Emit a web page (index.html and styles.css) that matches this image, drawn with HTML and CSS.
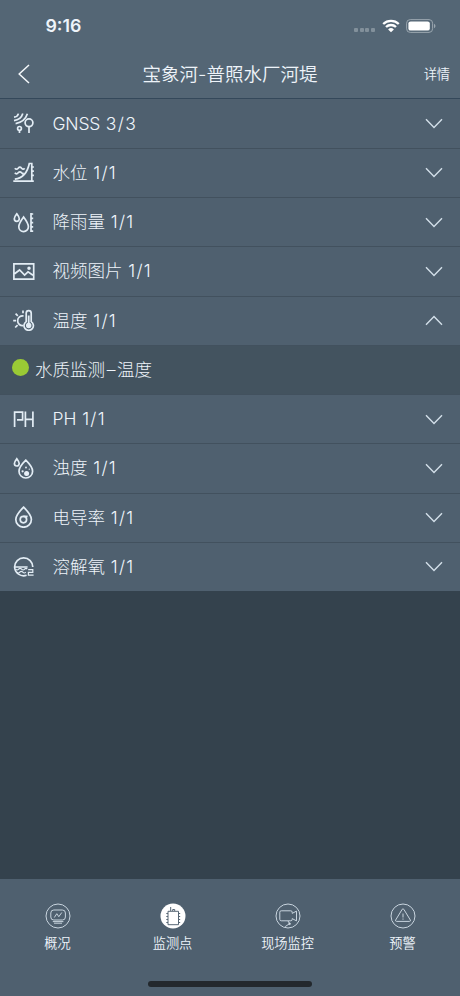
FILE: index.html
```
<!DOCTYPE html>
<html lang="zh-CN">
<head>
<meta charset="utf-8">
<title>宝象河-普照水厂河堤</title>
<link rel="stylesheet" href="styles.css">
</head>
<body>
<div class="app">
  <header class="header">
    <div class="status">
      <span class="time">9:16</span>
      <span class="signal"><i></i><i></i><i></i><i></i></span>
      <svg class="wifi" viewBox="0 0 18 14"><path d="M1.2 5a11.2 11.2 0 0 1 15.6 0M4 8a7.2 7.2 0 0 1 10 0" fill="none" stroke="#fff" stroke-width="2.3"/><path d="M9 13.3 6.1 10.5a4.1 4.1 0 0 1 5.8 0z" fill="#fff"/></svg>
      <svg class="battery" viewBox="0 0 30 14"><rect x=".6" y=".6" width="26" height="12.8" rx="3.6" fill="none" stroke="#9aa6af"/><rect x="2.4" y="2.4" width="21.4" height="9.2" rx="2.2" fill="#fff"/><path d="M28 4.8q1.5.7 1.5 2.2T28 9.2z" fill="#9aa6af"/></svg>
    </div>
    <div class="nav">
      <svg class="back" viewBox="0 0 12 20"><path d="M11 1 1.2 10 11 19"/></svg>
      <h1 class="title">宝象河-普照水厂河堤</h1>
      <a class="detail">详情</a>
    </div>
  </header>

  <main class="list">
    <div class="row">
      <svg class="icon" viewBox="0 0 22 22"><path d="M1 5.2Q4.6 4.8 5.4 1.6M1 8.7Q8 7.8 9.8 1.6M2.6 11.6Q11.8 10 14.4 1.8"/><circle cx="16" cy="10.8" r="3.9"/><path d="M16 14.7V21M6.5 18.4v2.6"/><circle cx="6.5" cy="16.4" r="1.9"/></svg>
      <span class="label"><span class="latin">GNSS</span> <span class="count">3/3</span></span><svg class="arrow" viewBox="0 0 18 11"><path d="m1 1.2 8 8.2 8-8.2"/></svg>
    </div>
    <div class="row">
      <svg class="icon" viewBox="0 0 22 22"><path d="M1.8 7.2q1.7 2 3.4 0t3.4 0 3 0M1.8 11.8q1.7 2 3.4 0t3.4 0 1.2 0M.3 20.2H20.8M1.8 18.2Q13.5 16.5 16.3 2.5H18.8V20M19 6h1.9M19 10.2h1.9M19 14.4h1.9"/></svg>
      <span class="label">水位 <span class="count">1/1</span></span><svg class="arrow" viewBox="0 0 18 11"><path d="m1 1.2 8 8.2 8-8.2"/></svg>
    </div>
    <div class="row">
      <svg class="icon" viewBox="0 0 22 22"><path d="M3.8 2.8Q1.3 6 1.3 7.8a2.5 2.5 0 0 0 5 0Q6.3 6 3.8 2.8zM10.6 6Q5.8 12.4 5.8 15.8a4.8 4.8 0 0 0 9.6 0Q15.4 12.4 10.6 6zM18 2v19M18 3h2.2M18 7.3h2.2M18 11.6h2.2M18 15.9h2.2M18 20.2h2.2"/></svg>
      <span class="label">降雨量 <span class="count">1/1</span></span><svg class="arrow" viewBox="0 0 18 11"><path d="m1 1.2 8 8.2 8-8.2"/></svg>
    </div>
    <div class="row">
      <svg class="icon" viewBox="0 0 22 22"><path d="M.9 3.8h19.8v15.4H.9zM1.6 13.8l5-3.8 5 5 3.4-3.2 5 3.4"/><circle cx="16" cy="8.2" r=".9" fill="#e8f0f8"/></svg>
      <span class="label">视频图片 <span class="count">1/1</span></span><svg class="arrow" viewBox="0 0 18 11"><path d="m1 1.2 8 8.2 8-8.2"/></svg>
    </div>
    <div class="row">
      <svg class="icon" viewBox="0 0 22 22"><path d="M13.2 12.6V4.2a2.5 2.5 0 0 1 5 0v8.4a4.7 4.7 0 1 1-5 0z"/><path d="M15.7 6.5v8" stroke-width="1.8"/><circle cx="15.7" cy="16.6" r="1.9" fill="#e8f0f8"/><path d="M10.6 7a4.9 4.9 0 1 0-.2 9.6M.2 11.6h2.8M2.6 4.6 4.8 6.8M10 1.5v2.8M2.2 18.5 4.6 16.1"/></svg>
      <span class="label">温度 <span class="count">1/1</span></span><svg class="arrow" viewBox="0 0 18 11"><path d="m1 9.8 8-8.2 8 8.2"/></svg>
    </div>
    <div class="row sub"><span class="dot"></span><span class="sublabel">水质监测<span class="dash">–</span>温度</span></div>
    <div class="row">
      <svg class="icon" viewBox="0 0 22 22"><path d="M1.6 19V4.2h8v7.6H4M12.4 3.5v15.4M19.9 3.5v15.4M12.4 11.4h7.5"/></svg>
      <span class="label">PH <span class="count">1/1</span></span><svg class="arrow" viewBox="0 0 18 11"><path d="m1 1.2 8 8.2 8-8.2"/></svg>
    </div>
    <div class="row">
      <svg class="icon" viewBox="0 0 22 22"><path d="M3.8 1.7Q1.4 4.8 1.4 6.6a2.4 2.4 0 0 0 4.8 0Q6.2 4.8 3.8 1.7zM12.8 3.2Q6 10 6 14.2a6.8 6.8 0 0 0 13.6 0Q19.6 10 12.8 3.2z"/><g fill="#e8f0f8" stroke="none"><circle cx="13.6" cy="16.5" r="2.5"/><circle cx="9.6" cy="14.3" r="1.1"/><circle cx="13" cy="10.5" r=".9"/><circle cx="16.3" cy="12.2" r=".6"/></g></svg>
      <span class="label">浊度 <span class="count">1/1</span></span><svg class="arrow" viewBox="0 0 18 11"><path d="m1 1.2 8 8.2 8-8.2"/></svg>
    </div>
    <div class="row">
      <svg class="icon" viewBox="0 0 22 22"><path d="M10.6 1.2Q2.8 8.8 2.8 13.4a7.8 7.8 0 0 0 15.6 0Q18.4 8.8 10.6 1.2z"/><circle cx="10.4" cy="13.6" r="3.2"/><path d="M10.4 10.4h4.2"/></svg>
      <span class="label">电导率 <span class="count">1/1</span></span><svg class="arrow" viewBox="0 0 18 11"><path d="m1 1.2 8 8.2 8-8.2"/></svg>
    </div>
    <div class="row">
      <svg class="icon" viewBox="0 0 22 22"><path d="M1.6 12a9.1 9.1 0 1 1 18.2 0M1.6 12a9.1 9.1 0 0 0 12 8.3M1.6 12h13"/><path stroke-width="1.2" d="M2.6 14.2q1.5 1.6 3 0t3 0 3 0 2.6 0M3.8 17.2q1.5 1.6 3 0t3 0 3 0M15.2 14.6h4.6v2.8h-4.4v2.8h5.2"/></svg>
      <span class="label">溶解氧 <span class="count">1/1</span></span><svg class="arrow" viewBox="0 0 18 11"><path d="m1 1.2 8 8.2 8-8.2"/></svg>
    </div>
  </main>

  <footer class="tabbar">
    <div class="tabs">
      <div class="tab"><svg class="tabicon" viewBox="0 0 26 26"><circle cx="13" cy="13" r="12"/><rect x="5.8" y="7" width="14.6" height="10" rx="3"/><path d="m9.3 14.5 2.5-3.8 2 3 3-4.2M7.8 18.6h10.6M9 20.2h8"/></svg><span>概况</span></div>
      <div class="tab"><svg class="tabicon" viewBox="0 0 26 26"><circle cx="13" cy="13" r="12.5" fill="#fff" stroke="none"/><path class="ink" d="M8 8.3h10.5v13.4H8zM10.7 8V4M12.7 8V6.5h2V8M6.3 10.5H8M6.3 13.5H8M6.3 16.5H8M6.3 19.5H8M18.5 10.5h1.7M18.5 13.5h1.7M18.5 16.5h1.7M18.5 19.5h1.7"/></svg><span>监测点</span></div>
      <div class="tab"><svg class="tabicon" viewBox="0 0 26 26"><circle cx="13" cy="13" r="12"/><path d="M6.2 7.8h9.6q1.4 0 1.4 1.4v1.2l4.3-2.3v9.8l-4.3-2.3v.8q0 1.4-1.4 1.4H6.2q-1.4 0-1.4-1.4V9.2q0-1.4 1.4-1.4zM13 18l1.6 2.6-4.4 3"/><circle cx="14.6" cy="20.8" r=".8" fill="#fff"/></svg><span>现场监控</span></div>
      <div class="tab"><svg class="tabicon" viewBox="0 0 26 26"><circle cx="13" cy="13" r="12"/><path d="M12.2 6.3q.8-1.1 1.6 0l6.6 10.8q.4 1.2-.8 1.3H6.4q-1.2-.1-.8-1.3zM13 10.5v4M13 15.5v1.2"/></svg><span>预警</span></div>
    </div>
    <div class="home"></div>
  </footer>
</div>
</body>
</html>
```
FILE: styles.css
```
* { box-sizing: border-box; }
body { margin: 0; font-family: Inter, "Noto Sans CJK SC", sans-serif; color: #eef4fa; }
.app { width: 460px; height: 996px; display: flex; flex-direction: column; background: #34424d; }
.header { height: 98.5px; background: #546675; border-bottom: 1px solid #34485a; }
.status { height: 50px; display: flex; align-items: center; padding: 1px 24px 0 45.5px; }
.time { flex: 1; font-size: 17.8px; font-weight: 600; }
.signal { display: flex; gap: 1.6px; margin: 9px 7px 0 0; }
.signal i { width: 4px; height: 4px; border-radius: 1px; background: #82909b; }
.wifi { width: 18px; height: 14px; margin-right: 6px; }
.battery { width: 30px; height: 14px; }
.nav { height: 48px; display: grid; grid-template-columns: 60px 1fr 60px; align-items: center; }
.back { width: 12px; height: 20px; margin-left: 18px; fill: none; stroke: #f4f8fb; stroke-width: 1.5; }
.title { margin: 0; font-size: 18.5px; font-weight: 350; text-align: center; line-height: 28px; }
.detail { font-size: 13.2px; font-weight: 350; text-align: right; padding: 0 10px 2px 0; }
.list { flex: 1; }
.row { height: 49.25px; display: flex; align-items: center; background: #4f606f; border-top: 1px solid #42515e; padding: 0 17px 0 13px; }
.row:first-child { border-top-color: #4f606f; }
.icon { width: 22px; height: 22px; fill: none; stroke: #e3edf5; stroke-width: 1.7; margin: 0 17.5px 1px 0; }
.label { flex: 1; font-size: 17.5px; font-weight: 300; line-height: 26px; }
.latin { letter-spacing: -.2px; }
.count { letter-spacing: 1.3px; margin-left: .8px; }
.arrow { width: 18px; height: 11px; fill: none; stroke: #d3dfe9; stroke-width: 1.4; }
.row.sub { background: #43535f; padding-left: 12px; }
.dot { width: 17px; height: 17px; border-radius: 50%; background: #9aca35; margin: 0 6px 5px 0; }
.sublabel { font-size: 17.5px; font-weight: 300; line-height: 26px; }
.dash { display: inline-block; width: 12px; text-align: center; }
.tabbar { height: 117px; background: #4f606f; display: flex; flex-direction: column; align-items: center; justify-content: space-between; padding: 24px 0 9px; }
.tabs { width: 100%; display: grid; grid-template-columns: repeat(4, 1fr); }
.tab { display: flex; flex-direction: column; align-items: center; font-size: 13.2px; font-weight: 350; line-height: 20px; gap: 4px; }
.tabicon { width: 26px; height: 26px; fill: none; stroke: #c8d4de; stroke-width: 1; }
.ink { stroke: #566674; }
.home { width: 164px; height: 6px; border-radius: 3px; background: #23282d; }
```
